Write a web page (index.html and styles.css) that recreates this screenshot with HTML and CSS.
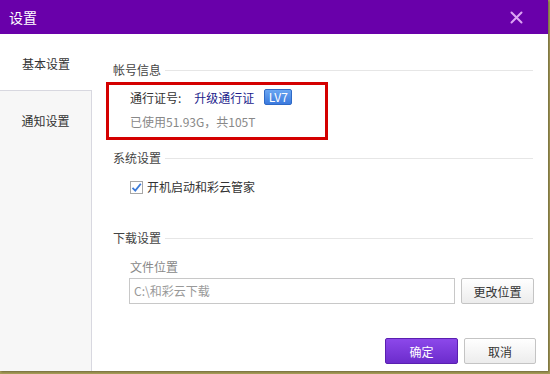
FILE: index.html
```html
<!DOCTYPE html>
<html lang="zh">
<head>
    <meta charset="UTF-8">
    <title>设置</title>
    <link rel="stylesheet" href="styles.css">
</head>
<body>
    <div class="dialog">
        <div class="titlebar">
            <span class="title">设置</span>
            <svg class="close" width="13" height="13" viewBox="0 0 13 13">
                <path d="M1.5 1.5 L11.5 11.5 M11.5 1.5 L1.5 11.5" stroke="#dda4f4" stroke-width="2" stroke-linecap="round"/>
            </svg>
        </div>
        <div class="main">
            <div class="sidebar">
                <div class="tab active">基本设置</div>
                <div class="tab">通知设置</div>
            </div>
            <div class="content">
                <div class="section-title">帐号信息</div>
                <div class="account-box">
                    <div class="account-row">
                        <span class="label">通行证号:</span>
                        <a class="upgrade">升级通行证</a>
                        <span class="badge">LV7</span>
                    </div>
                    <div class="usage">已使用51.93G，共105T</div>
                </div>

                <div class="section-title sys">系统设置</div>
                <label class="check-row">
                    <span class="checkbox">
                        <svg width="11" height="11" viewBox="0 0 11 11">
                            <path d="M1.5 5.8 L4.3 8.6 L9.8 1.8" fill="none" stroke="#3b7ad8" stroke-width="1.8"/>
                        </svg>
                    </span>
                    开机启动和彩云管家
                </label>

                <div class="section-title dl">下载设置</div>
                <div class="field-label">文件位置</div>
                <div class="path-row">
                    <div class="path-input">C:\和彩云下载</div>
                    <button class="btn change">更改位置</button>
                </div>

                <div class="footer">
                    <button class="btn primary">确定</button>
                    <button class="btn cancel">取消</button>
                </div>
            </div>
        </div>
    </div>
</body>
</html>
```

FILE: styles.css
```css
body {
    margin: 0;
    padding: 0;
    width: 550px;
    height: 374px;
    overflow: hidden;
    background: #a89d58;
    font-family: 'Noto Sans CJK SC', 'Noto Sans', sans-serif;
    font-size: 12px;
    color: #333;
}

.dialog {
    width: 548px;
    height: 371px;
    background: #fff;
    display: flex;
    flex-direction: column;
    box-shadow: 1px 1px 2px rgba(0,0,0,0.35);
}

.titlebar {
    height: 34px;
    flex: none;
    background: #6900aa;
    display: flex;
    align-items: center;
    justify-content: space-between;
    padding: 0 25px 0 9px;
}

.title {
    color: #fff;
    font-size: 14px;
    line-height: 18px;
}

.close {
    display: block;
}

.main {
    flex: 1;
    display: flex;
}

.sidebar {
    width: 91px;
    flex: none;
    background: #f7f7f7;
    border-right: 1px solid #d8d8e0;
}

.tab {
    height: 60px;
    line-height: 60px;
    text-align: center;
    border-top: 1px solid #d8d8e0;
}

.tab.active {
    height: 56px;
    line-height: 60px;
    border-top: none;
    background: #fff;
    margin-right: -1px;
}

.content {
    flex: 1;
    padding: 28px 12px 0 21px;
}

.section-title {
    display: flex;
    align-items: center;
    line-height: 16px;
    color: #444;
    margin-right: 3px;
}

.section-title::after {
    content: "";
    flex: 1;
    height: 1px;
    background: #e6e6e6;
    margin-left: 4px;
}

.account-box {
    width: 195px;
    margin: 4px 0 0 -7px;
    border: 3px solid #d40000;
    padding: 2px 0 7px 21px;
}

.account-row {
    height: 20px;
    display: flex;
    align-items: center;
}

.label {
    margin-right: 13px;
}

.upgrade {
    color: #1c1c8c;
    margin-right: 10px;
}

.badge {
    width: 26px;
    height: 14px;
    line-height: 14px;
    text-align: center;
    color: #fff;
    background: linear-gradient(180deg, #6aa6f2 0%, #3b7ade 100%);
    border: 1px solid #2f6ac6;
    border-radius: 2px;
}

.usage {
    margin-top: 7px;
    line-height: 16px;
    color: #888;
}

.section-title.sys {
    margin-top: 10px;
}

.check-row {
    display: flex;
    align-items: center;
    margin-top: 13px;
    padding-left: 17px;
    line-height: 16px;
}

.checkbox {
    width: 11px;
    height: 11px;
    border: 1px solid #a7a7a7;
    background: #fff;
    margin-right: 4px;
    display: flex;
    align-items: center;
    justify-content: center;
}

.section-title.dl {
    margin-top: 35px;
}

.field-label {
    margin-top: 13px;
    padding-left: 17px;
    line-height: 16px;
    color: #888;
}

.path-row {
    display: flex;
    margin: 3px 2px 0 16px;
    gap: 6px;
}

.path-input {
    width: 320px;
    height: 24px;
    line-height: 24px;
    border: 1px solid #c8c8c8;
    padding-left: 4px;
    color: #999;
}

.btn {
    height: 26px;
    font-family: inherit;
    font-size: 12px;
    color: #333;
    border: 1px solid #c4c4c4;
    border-radius: 2px;
    background: linear-gradient(180deg, #ffffff 0%, #ececec 100%);
    padding: 0;
}

.btn.change {
    width: 73px;
}

.footer {
    display: flex;
    justify-content: flex-end;
    gap: 6px;
    margin-top: 34px;
}

.btn.primary {
    width: 73px;
    color: #fff;
    border-color: #5a1fb0;
    background: linear-gradient(180deg, #8c48ea 0%, #6c2ccc 100%);
}

.btn.cancel {
    width: 72px;
}
```
